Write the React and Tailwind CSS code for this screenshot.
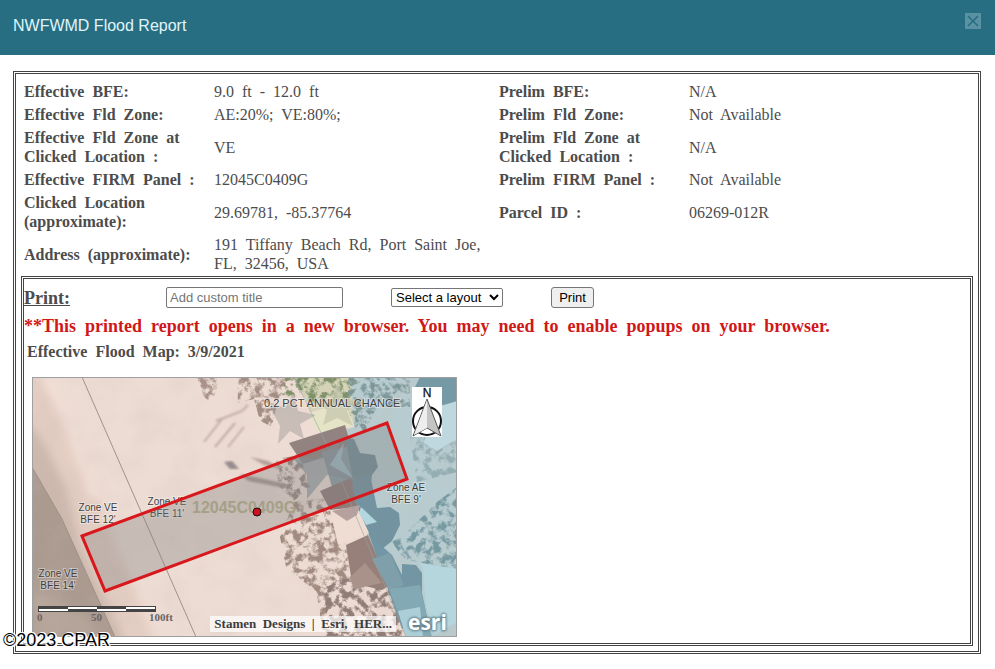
const rows = [
  ['Effective  BFE:', '9.0  ft  -  12.0  ft', 'Prelim  BFE:', 'N/A'],
  ['Effective  Fld  Zone:', 'AE:20%;  VE:80%;', 'Prelim  Fld  Zone:', 'Not  Available'],
  ['Effective  Fld  Zone  at\nClicked  Location  :', 'VE', 'Prelim  Fld  Zone  at\nClicked  Location  :', 'N/A'],
  ['Effective  FIRM  Panel  :', '12045C0409G', 'Prelim  FIRM  Panel  :', 'Not  Available'],
  ['Clicked  Location\n(approximate):', '29.69781,  -85.37764', 'Parcel  ID  :', '06269-012R'],
  ['Address  (approximate):', '191  Tiffany  Beach  Rd,  Port  Saint  Joe,\nFL,  32456,  USA', '', ''],
];

const zones = [
  { x: 66, y: 134, name: 'Zone VE', bfe: "BFE 12'" },
  { x: 135, y: 128, name: 'Zone VE', bfe: "BFE 11'" },
  { x: 26, y: 200, name: 'Zone VE', bfe: "BFE 14'" },
  { x: 374, y: 114, name: 'Zone AE', bfe: "BFE 9'" },
];

function FloodMap() {
  return (
    <svg viewBox="0 0 425 260" className="block w-full" role="img" aria-label="Effective flood map">
      <defs>
        <filter id="trees" x="0" y="0" width="100%" height="100%">
          <feTurbulence type="fractalNoise" baseFrequency="0.13" numOctaves="5" seed="7" />
          <feColorMatrix values="0 0 0 0 0  0 0 0 0 0  0 0 0 0 0  5 0 0 0 -2.2" result="n" />
          <feComposite in="SourceGraphic" in2="n" operator="in" />
          <feGaussianBlur stdDeviation="0.4" />
        </filter>
        <filter id="sand" x="0" y="0" width="100%" height="100%">
          <feTurbulence type="fractalNoise" baseFrequency="0.03" numOctaves="5" seed="3" />
          <feColorMatrix values="0 0 0 0 0.6  0 0 0 0 0.5  0 0 0 0 0.46  1 0 0 0 -0.42" />
        </filter>
        <filter id="soft"><feGaussianBlur stdDeviation="5" /></filter>
        <filter id="soft1"><feGaussianBlur stdDeviation="1" /></filter>
      </defs>

      {/* sand and wet beach */}
      <rect width="425" height="260" fill="#eddcd3" />
      <g filter="url(#soft)">
        <path d="M-10 -10L12 0L40 60L70 130L125 270H-10Z" fill="#e4cec3" />
        <path d="M-10 40L10 62L34 110L48 165L95 270H-10Z" fill="#ccb8ad" />
        <path d="M14 0L38 52L62 120" stroke="#f2dfd7" strokeWidth="9" fill="none" />
      </g>
      <path d="M0 90L30 142L68 226L83 260H0Z" fill="#aa9a90" />
      <path d="M0 215L50 235L72 260H0Z" fill="#b5a499" filter="url(#soft)" />

      {/* zone tints */}
      <path d="M263 0H318L322 50L291 60Z" fill="#d6d5b9" />
      <path d="M318 0H425V260H374L335 158L291 60L322 50Z" fill="#b7ccd0" />
      <rect width="425" height="260" filter="url(#sand)" opacity="0.4" />

      {/* ground cover */}
      <path d="M165 0H188L180 26L172 20Z" fill="#a8928a" filter="url(#trees)" />
      <path d="M205 0H262L246 22L240 50L228 44L222 22L206 26Z" fill="#a38e85" filter="url(#trees)" />
      <path d="M254 0H325V45L300 30L250 18Z" fill="#7f9068" filter="url(#trees)" />
      <path d="M315 0H378V30L345 30L330 60L316 40Z" fill="#7d9698" filter="url(#trees)" />
      <path d="M244 82L268 78L278 110L262 124L246 108Z" fill="#9c8983" filter="url(#trees)" />
      <path d="M262 125L300 120L320 190L318 260H292L284 215L254 190L248 160Z" fill="#a18b81" filter="url(#trees)" />
      <path d="M360 165L372 158L405 125L425 110V195L400 188L372 182Z" fill="#7698a0" filter="url(#trees)" />
      <path d="M378 60H425V95L385 105Z" fill="#94adb2" filter="url(#trees)" />
      <path d="M292 205L365 195L372 260H295Z" fill="#917d78" filter="url(#trees)" />
      <path d="M172 65L190 42M183 70L203 46M196 70L212 50M184 44L210 34L216 28" stroke="#c0aca4" strokeWidth="2" fill="none" filter="url(#soft1)" />
      <path d="M192 85L200 84L207 92L198 92Z" fill="#978b8d" filter="url(#soft1)" />
      <path d="M208 97L255 107L252 111L216 104Z" fill="#a89791" filter="url(#soft1)" />
      <path d="M218 80L236 84L250 92L232 88Z" fill="#b3a19a" filter="url(#soft1)" />

      {/* houses and their shadows */}
      <path d="M254 43L312 25L322 50L263 62Z" fill="#eedcd5" />
      <path d="M276 38L312 24L322 48L288 58Z" fill="#e6e4c6" />
      <path d="M257 66L313 48L320 72L271 87Z" fill="#938380" />
      <path d="M313 60L322 62L328 76L343 78L346 90L340 98L338 112L330 106L314 98Z" fill="#738f98" />
      <path d="M290 75L315 70L321 104L300 110Z" fill="#8d9da4" />
      <path d="M288 114L321 100L334 132L303 142Z" fill="#8f7c79" />
      <path d="M320 102L338 97L345 131L358 130L367 136L368 148L360 164L350 172L338 160L322 122Z" fill="#7393a0" />
      <path d="M298 133L325 130L337 156L306 168Z" fill="#efdcd2" />
      <path d="M300 134L328 128L325 138L315 144Z" fill="#b5a29e" />
      <path d="M329 130L345 145L334 148L327 136Z" fill="#b3d7df" />
      <path d="M314 168L336 158L357 209L350 213L320 206Z" fill="#968079" />
      <path d="M318 200L333 186L350 206L322 212Z" fill="#a8928a" />
      <path d="M337 158L360 178L370 198L370 187L384 188L390 196V216L395 240L370 252L356 212Z" fill="#7296a3" />
      <path d="M340 182L358 176L372 208L358 214Z" fill="#7fa0aa" />
      <path d="M357 212L388 208L396 245L400 260H375Z" fill="#83a9b4" />
      <path d="M366 234L388 230L391 260H374Z" fill="#accfd7" />
      <path d="M388 186L425 192V245L402 258L394 228L391 192Z" fill="#b6d6de" />
      <path d="M388 0H425V25L402 30L380 16Z" fill="#7699a6" />
      <path d="M400 32L425 24V62L405 74L392 66Z" fill="#bfd7df" />
      <path d="M262 0L292 62L374 260" stroke="#97a5a5" strokeWidth="1" strokeOpacity="0.6" fill="none" />

      {/* watermark stars */}
      <path d="M235 24L253 31L262 16L266 34L284 38L268 47L272 62L258 54L246 67L248 49Z" fill="#a39d9b" opacity="0.5" />
      <path d="M306 3L310 20L327 24L315 34L321 49L305 41L291 48L295 33L280 24L299 22Z" fill="#c4c7ae" opacity="0.75" />
      <path d="M307 62L304 80L325 104L295 98L275 122L275 98L260 80L284 82Z" fill="#87929a" opacity="0.65" />
      <path d="M312 66L309 82L321 101L298 88Z" fill="#a3c0cb" opacity="0.8" />

      {/* zone boundaries */}
      <path d="M50 0L164 260M0 90L30 142L83 260" stroke="#a19187" strokeWidth="1" fill="none" />

      <g fontFamily="'Liberation Sans', sans-serif" fill="#3f3f3f" stroke="#fff" strokeOpacity="0.4" strokeWidth="2" paintOrder="stroke">
        <text x="232" y="30" fontSize="11">0.2 PCT ANNUAL CHANCE</text>
        {zones.map((z) => (
          <text key={z.bfe} textAnchor="middle" fontSize="10">
            <tspan x={z.x} y={z.y}>{z.name}</tspan>
            <tspan x={z.x} y={z.y + 12}>{z.bfe}</tspan>
          </text>
        ))}
      </g>

      {/* parcel */}
      <path d="M50 159L355 46L375 102L73 214Z" fill="#808080" fillOpacity="0.35" stroke="#d8181c" strokeWidth="3" />
      <text x="160" y="136" fontFamily="'Liberation Sans', sans-serif" fontSize="16" fontWeight="700" fill="#a5a087">12045C0409G</text>
      <circle cx="225" cy="135" r="4" fill="#d0101c" stroke="#111" strokeWidth="1" />

      {/* north arrow */}
      <rect x="380" y="10" width="30" height="50" fill="#fff" />
      <text x="395" y="20" textAnchor="middle" fontFamily="'Liberation Sans', sans-serif" fontSize="12" fill="#111" stroke="#111" strokeWidth="0.3">N</text>
      <circle cx="395" cy="44" r="14" fill="none" stroke="#111" strokeWidth="2" />
      <path d="M395 22L409 59L395 51L381 59Z" fill="#c4c4c4" stroke="#555" strokeWidth="1" />
      <path d="M395 23V51L382 58Z" fill="#eee" />

      {/* scale bar */}
      <rect x="6" y="229" width="118" height="6" fill="#444" />
      <path d="M7 232H36V234H7ZM36 230H65V232H36ZM65 232H94V234H65ZM94 230H123V232H94Z" fill="#fff" />
      <g fontFamily="'Liberation Serif', serif" fontSize="11" fontWeight="700" fill="#6b6461">
        <text x="5" y="244">0</text>
        <text x="59" y="244">50</text>
        <text x="117" y="244">100ft</text>
      </g>

      <text x="376" y="253" fontFamily="'Open Sans', sans-serif" fontSize="21" fontWeight="700" fill="none" stroke="#5b7a85" strokeWidth="2" filter="url(#soft1)" aria-hidden="true">esri</text>
      <text x="376" y="253" fontFamily="'Open Sans', sans-serif" fontSize="21" fontWeight="700" fill="#fff">esri</text>
      <rect x="0.5" y="0.5" width="424" height="259" fill="none" stroke="#a0a0a0" />
    </svg>
  );
}

export default function App() {
  return (
    <div className="relative bg-white font-['Liberation_Serif',serif] text-base leading-[19px] text-[#4c4c4c]">
      <header className="flex h-[55px] items-start justify-between bg-[#276e83] px-[13px] pt-[13px]">
        <h1 className="font-['Liberation_Sans',sans-serif] text-base leading-[26px] text-[#e0f5fa]">NWFWMD Flood Report</h1>
        <button type="button" aria-label="Close" className="mr-px flex size-4 items-center justify-center bg-[#5a92a3]">
          <svg viewBox="0 0 16 16" className="size-4">
            <path d="M3 3L13 13M13 3L3 13" stroke="#276e83" strokeWidth="1.6" />
          </svg>
        </button>
      </header>

      <main className="mt-4 mr-[14px] ml-[13px] border-[3px] border-double border-[#444] px-[5px] pt-[6px] pb-[5px]">
        <table className="w-full table-fixed border-collapse whitespace-pre-wrap">
          <colgroup>
            <col className="w-[190px]" />
            <col className="w-[285px]" />
            <col className="w-[190px]" />
            <col />
          </colgroup>
          <tbody>
            {rows.map(([label, value, label2, value2]) => (
              <tr key={label}>
                <th scope="row" className="px-[3px] py-[2px] text-left align-middle">{label}</th>
                <td className="px-[3px] py-[2px] align-middle">{value}</td>
                {label2 && <th scope="row" className="px-[3px] py-[2px] text-left align-middle">{label2}</th>}
                {value2 && <td className="px-[3px] py-[2px] align-middle">{value2}</td>}
              </tr>
            ))}
          </tbody>
        </table>

        <section className="mt-px border-[3px] border-double border-[#444] pb-[6px]">
          <div className="flex items-center pt-2 font-['Liberation_Sans',sans-serif] text-[13px] leading-4">
            <label htmlFor="title" className="w-[142px] font-['Liberation_Serif',serif] text-lg leading-5 font-bold underline">Print:</label>
            <input id="title" type="text" placeholder="Add custom title" className="mr-12 h-[21px] w-[177px] rounded-[2px] border border-[#767676] px-[3px] text-black placeholder:text-[#757575]" />
            <select aria-label="Layout" className="mr-12 h-[19px] w-[112px] rounded-[2px] border border-[#767676] bg-white text-black">
              <option>Select a layout</option>
            </select>
            <button type="button" className="h-[21px] w-[43px] rounded-[3px] border border-[#767676] bg-[#efefef] text-black">Print</button>
          </div>
          <p className="mt-2 whitespace-pre-wrap text-lg leading-5 font-bold text-[#d01818]">**This  printed  report  opens  in  a  new  browser.  You  may  need  to  enable  popups  on  your  browser.</p>
          <h2 className="mt-[6px] ml-[3px] whitespace-pre-wrap font-bold">Effective  Flood  Map:  3/9/2021</h2>
          <div className="relative mt-4 ml-2 w-full max-w-[425px]">
            <FloodMap />
            <div className="absolute right-[61px] bottom-[5px] whitespace-pre bg-white/70 px-1 text-[13px] leading-4 font-bold text-[#3c3c3c]">Stamen  Designs  |  Esri,  HER...</div>
          </div>
        </section>
      </main>
      <div className="absolute bottom-[2px] left-[3px] font-['Liberation_Sans',sans-serif] text-lg leading-6 text-black [text-shadow:1px_1px_0_#fff,-1px_1px_0_#fff,1px_-1px_0_#fff,2px_1px_0_#fff]">©2023 CPAR</div>
    </div>
  );
}
